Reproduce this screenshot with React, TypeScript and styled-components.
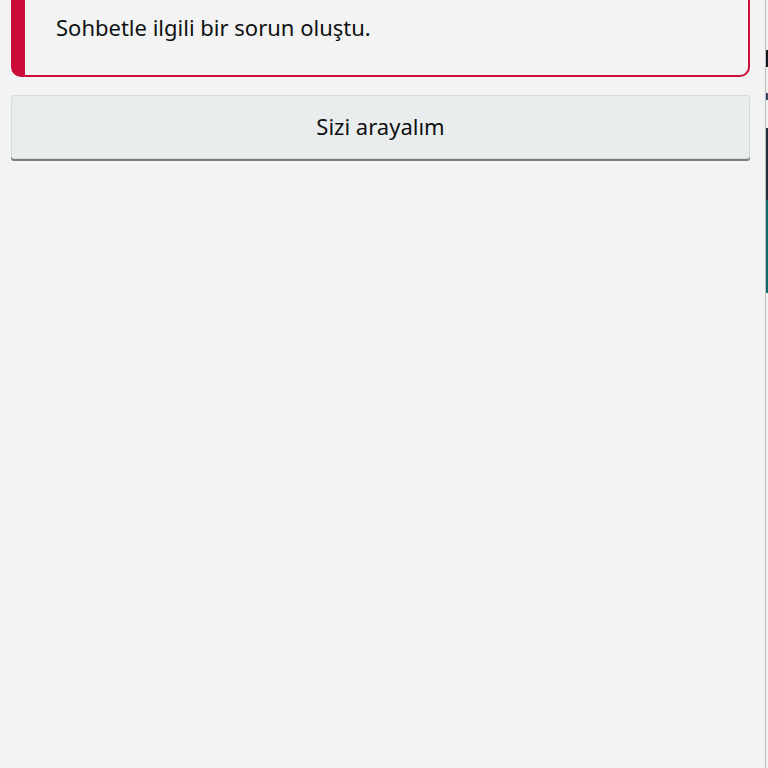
import styled, { createGlobalStyle } from "styled-components";

const GlobalStyle = createGlobalStyle`
  html, body {
    margin: 0;
    padding: 0;
    background: #f3f3f3;
  }
  body {
    font-family: "Noto Sans", "Open Sans", Arial, sans-serif;
    color: #0f1111;
  }
`;

const Frame = styled.div`
  display: flex;
  width: 768px;
  height: 768px;
  overflow: hidden;
`;

const Panel = styled.div`
  flex: 1;
  display: flex;
  flex-direction: column;
  gap: 18px;
  padding: 0 15px 0 11px;
  background: #f3f3f3;
`;

const Alert = styled.div`
  display: flex;
  align-items: flex-end;
  height: 77px;
  padding: 0 20px 0 31px;
  border: 2px solid #cc0c39;
  border-left-width: 14px;
  border-top: none;
  border-radius: 0 0 10px 10px;
  box-sizing: border-box;
`;

const AlertText = styled.p`
  margin: 0 0 34px;
  font-size: 22px;
  line-height: 28px;
  color: #0f1111;
`;

const CallButton = styled.button`
  height: 64px;
  padding: 0 0 3px;
  border: 1px solid #d5d9d9;
  border-radius: 3px;
  background: #eaeded;
  box-shadow: 0 2px 0 #7a7f7f;
  font-family: inherit;
  font-size: 22px;
  color: #0f1111;
  cursor: pointer;
`;

const Edge = styled.div`
  width: 2px;
  border-left: 1px solid #bdbdbd;
  display: flex;
  flex-direction: column;
`;

const EdgeBand = styled.div<{ $h: number; $c: string }>`
  height: ${(p) => p.$h}px;
  background: ${(p) => p.$c};
`;

const edgeBands = [
  { h: 50, c: "#f3f3f3" },
  { h: 17, c: "#131921" },
  { h: 26, c: "#f3f3f3" },
  { h: 7, c: "#37475a" },
  { h: 28, c: "#f3f3f3" },
  { h: 72, c: "#232f3e" },
  { h: 93, c: "#0e6b6b" },
];

export default function App() {
  return (
    <>
      <GlobalStyle />
      <Frame>
        <Panel>
          <Alert>
            <AlertText>Sohbetle ilgili bir sorun oluştu.</AlertText>
          </Alert>
          <CallButton>Sizi arayalım</CallButton>
        </Panel>
        <Edge>
          {edgeBands.map((b, i) => (
            <EdgeBand key={i} $h={b.h} $c={b.c} />
          ))}
        </Edge>
      </Frame>
    </>
  );
}
